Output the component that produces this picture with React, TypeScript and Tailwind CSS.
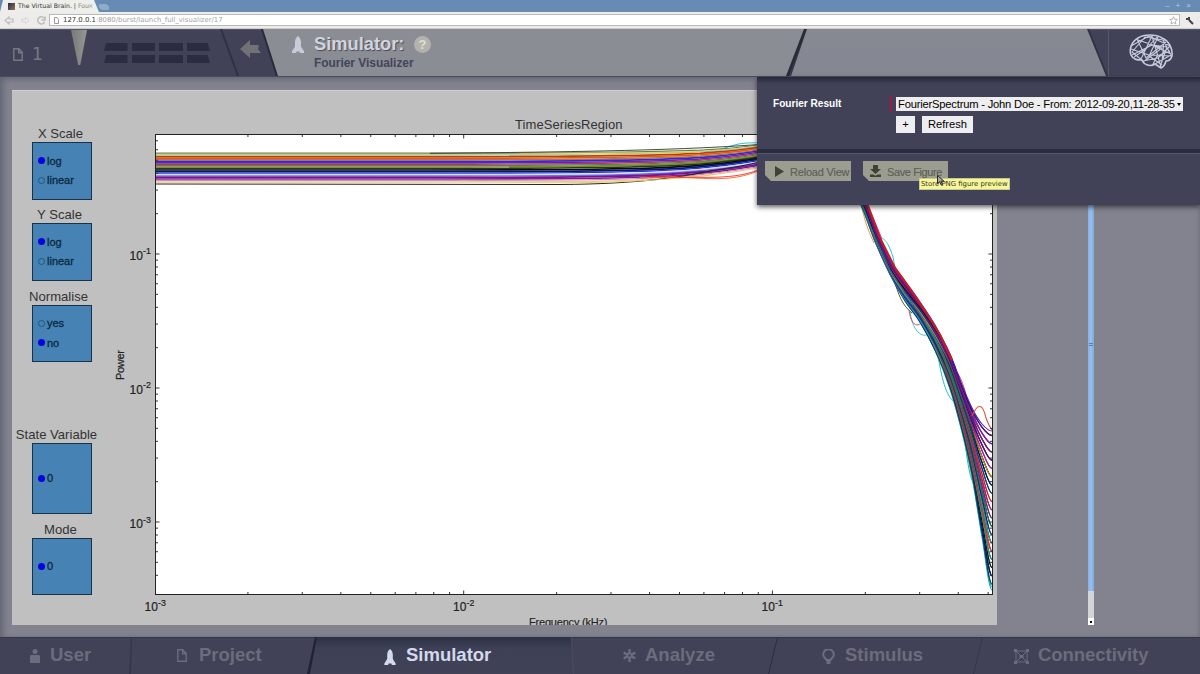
import React from "react";

type Pt = [number, number];

function spline(points: Pt[]): string {
  let d = `M${points[0][0]} ${points[0][1].toFixed(1)}`;
  for (let i = 0; i < points.length - 1; i++) {
    const p0 = points[Math.max(0, i - 1)];
    const p1 = points[i];
    const p2 = points[i + 1];
    const p3 = points[Math.min(points.length - 1, i + 2)];
    const h = (p2[0] - p1[0]) / 3;
    const m1 = (p2[1] - p0[1]) / (p2[0] - p0[0]);
    const m2 = i + 2 > points.length - 1 ? 0 : (p3[1] - p1[1]) / (p3[0] - p1[0]);
    d += `C${(p1[0] + h).toFixed(1)} ${(p1[1] + m1 * h).toFixed(1)} ${(p2[0] - h).toFixed(1)} ${(p2[1] - m2 * h).toFixed(1)} ${p2[0]} ${p2[1].toFixed(1)}`;
  }
  return d;
}

const flatLines: [number, string, number][] = [
  [153.2, "#77803a", 1.2],
  [154.8, "#9fd8a0", 1.4],
  [156.6, "#c23c10", 1.8],
  [158.2, "#d8601c", 1.7],
  [159.8, "#c9722e", 1.4],
  [161.4, "#2b2bd8", 1.6],
  [162.9, "#5a28b8", 1.6],
  [164.3, "#c0305c", 1.4],
  [165.6, "#5c7a5c", 1.4],
  [167, "#739030", 1.6],
  [168.5, "#2c3a08", 1.6],
  [170, "#080c10", 1.7],
  [171.6, "#0c1470", 1.7],
  [173.1, "#2838c8", 1.4],
  [174.6, "#d4dcff", 1.2],
  [176, "#6078d8", 1.3],
  [177.4, "#80108c", 1.8],
  [179, "#841898", 1.6],
  [180.4, "#b88ab0", 1],
  [182, "#f4c690", 1.3],
  [184, "#20281c", 1],
];

const upperColors = ["#4a20b0", "#5a108c", "#111111", "#7a1cac", "#b81c9c", "#3c2080", "#8c1450", "#2030b0"];
const lowerColors = ["#111111", "#0b2a80", "#c8202a", "#12a0a0", "#208c40", "#16309c", "#e04020", "#6a1ca8", "#101820", "#20a890", "#b81c70", "#d88020", "#1c4ca0", "#086030", "#8c1430"];

const upper: Pt[] = [[858, 188], [866, 203], [875, 227], [890, 260], [905, 281], [920, 302], [935, 325], [950, 354], [962, 385], [972, 408], [982, 424], [992, 431]];
const lower: Pt[] = [[858, 199], [866, 219], [875, 243], [890, 276], [905, 303], [920, 324], [935, 352], [950, 389], [962, 432], [972, 477], [982, 537], [992, 590]];

const fallLines = Array.from({ length: 54 }, (_, i) => {
  const t = i / 53;
  const mixed = ((i * 23) % 54) / 53;
  const wobble = (((i * 29) % 11) / 10 - 0.5) * 0.05;
  const points: Pt[] = upper.map(([x, y], k) => {
    const blend = Math.max(0, Math.min(1, (7 - k) / 4)) * 0.55;
    const spread = t * (1 - blend) + mixed * blend;
    const end = k > 9 && i > 0 && i < 52 ? Math.max(0, spread + wobble) : spread;
    return [x, y + (lower[k][1] - y) * end] as Pt;
  });
  const color = i > 51 ? "#18b8a0" : t < 0.26 ? upperColors[i % upperColors.length] : lowerColors[(i * 4) % lowerColors.length];
  return { d: spline(points), color };
}).reverse();

const xDecade = 308.7;
const yDecade = 134;

const xTicks: number[] = [];
for (let k = 0; k < 3; k++) for (let n = 2; n < 10; n++) {
  const x = 155 + xDecade * (k + Math.log10(n));
  if (x < 990) xTicks.push(x);
}
const yTicks: number[] = [];
for (let k = 0; k < 5; k++) for (let n = 2; n < 10; n++) {
  const y = 254 + yDecade * (k - Math.log10(n));
  if (y > 136 && y < 592) yTicks.push(y);
}

function Exponent({ x, y, e }: { x: number; y: number; e: string }) {
  return (
    <g fill="#222">
      <text x={x} y={y} fontSize="12" stroke="#222" strokeWidth=".2">10</text>
      <text x={x + 13.5} y={y - 5.5} fontSize="8.8" stroke="#222" strokeWidth=".2">{e}</text>
    </g>
  );
}

function Chart() {
  return (
    <svg className="h-[534px] w-[885px] shrink-0 font-['Liberation_Sans',sans-serif]" viewBox="112 91 885 534">
      <defs>
        <clipPath id="plot"><rect x="155.5" y="134.5" width="837" height="460" /></clipPath>
      </defs>
      <rect x="155.5" y="134.5" width="837" height="460" fill="#fff" />
      <g fill="none" clipPath="url(#plot)">
        <path d="M715 152C735 143 745 142 765 143" stroke="#30c8c8" strokeWidth="1.1" />
        {flatLines.map(([y, color, width], i) => {
          const f = i / (flatLines.length - 1);
          const end = 146 + 24 * f;
          return (
            <path
              key={y}
              d={
                i === flatLines.length - 1
                  ? "M155 184L560 184.5C640 184 680 177 710 171C735 167 745 166 775 158"
                  : `M155 ${y}L430 ${y}C560 ${y} 650 ${y - 1 + f} 700 ${y - 3 - f * 3}C725 ${y - 5 - f * 4} 740 ${end + 3} 775 ${end - 4}`
              }
              stroke={color}
              strokeWidth={width}
            />
          );
        })}
        <path d="M520 153.5C600 150 640 155 700 152" stroke="#e0c030" strokeWidth=".8" />
        <path d="M430 153.3C580 152 690 150 765 144" stroke="#30382c" strokeWidth=".9" />
        <path d="M460 181C560 184 640 184 715 174" stroke="#e8d078" strokeWidth="1" />
        <path d="M640 178C700 174 725 187 765 168" stroke="#ff7038" strokeWidth="1" />
        <path d="M650 177C700 176 735 182 765 167" stroke="#e8302c" strokeWidth=".9" />
        <path d="M861 203Q865 225 874 243" stroke="#f09838" />
        <path d="M867 203Q874 220 882 239" stroke="#d038c8" />
        <path d="M876 243C880 236 886 235 893 257Q894 268 899 278" stroke="#28c4d8" />
        <path d="M893 277C899 296 902 305 912 313" stroke="#506018" />
        <path d="M910 311C912 330 922 340 930 333" stroke="#40c4c8" />
        <path d="M909 310C911 325 917 328 922 322" stroke="#d05060" />
        <path d="M938 355C941 375 946 398 955 402" stroke="#28b8d8" />
        <path d="M950 367C957 366 965 387 967 400" stroke="#e04048" />
        <path d="M962 420C967 455 969 488 979 488" stroke="#20b8b0" />
        {fallLines.map((line, i) => (
          <path key={i} d={line.d} stroke={line.color} strokeWidth="1.1" />
        ))}
        <path d="M861 202L875 237L890 270L905 293L920 314L935 340L950 372L962 406" stroke="#168068" strokeWidth="1.2" />
        <path d="M862 190L880 238L895 268L910 289L925 311L940 335L952 360" stroke="#c81c1c" strokeWidth="2.2" />
        <path d="M972 416C978 402 983 404 986 418Q989 426 992 430" stroke="#e05038" strokeWidth="1.1" />
      </g>
      <g stroke="#333" strokeWidth="1">
        {xTicks.map((x) => <path key={x} d={`M${x} 594.5v-2.5M${x} 134.5v2.5`} />)}
        {yTicks.map((y) => <path key={y} d={`M155.5 ${y}h2.5M992.5 ${y}h-2.5`} />)}
        {[463.7, 772.4].map((x) => <path key={x} d={`M${x} 594.5v-4M${x} 134.5v4`} />)}
        {[254, 388, 522].map((y) => <path key={y} d={`M155.5 ${y}h4M992.5 ${y}h-4`} />)}
      </g>
      <rect x="155.5" y="134.5" width="837" height="460" fill="none" stroke="#222" />
      <text x="515" y="129" fontSize="13" textLength="107.5" fill="#333">TimeSeriesRegion</text>
      <Exponent x={129.5} y={259.5} e="-1" />
      <Exponent x={129.5} y={393.5} e="-2" />
      <Exponent x={129.5} y={528} e="-3" />
      <Exponent x={144.5} y={611} e="-3" />
      <Exponent x={453} y={611} e="-2" />
      <Exponent x={761.5} y={611} e="-1" />
      <text x="529" y="626" fontSize="11" textLength="78.5" fill="#222" stroke="#222" strokeWidth=".15">Frequency (kHz)</text>
      <text transform="translate(124 380) rotate(-90)" fontSize="11" textLength="30" fill="#222" stroke="#222" strokeWidth=".2">Power</text>
    </svg>
  );
}

function Widget({ title, options, selected, box, shift }: { title: string; options: string[]; selected: number; box: string; shift: string }) {
  return (
    <div className="flex w-[60px] flex-col items-center">
      <div className={`flex h-4 items-center whitespace-nowrap text-[13.1px] leading-4 text-[#333] ${shift}`}>{title}</div>
      <div className={`flex w-full flex-col justify-center gap-[7.5px] border border-[#17334a] bg-[#4682b4] pb-px pl-[5px] ${box}`}>
        {options.map((label, i) => (
          <div key={label} className="flex h-3 items-center gap-[2px] text-[11px] leading-3 text-[#0a2940] [-webkit-text-stroke:.3px_#0a2940]">
            <span className={`size-[7px] rounded-full ${i === selected ? "bg-[#0404e0]" : "border border-[#175982]"}`} />
            {label}
          </div>
        ))}
      </div>
    </div>
  );
}

function Rocket({ className }: { className: string }) {
  return (
    <svg className={className} viewBox="0 0 12 17" fill="currentColor">
      <path d="M6 0C3.7 1.7 3 4 3 6.600v4L0 15.300V17h4l.6-1.500h2.800L8 17h4v-1.700l-3-4.700v-4C9 4 8.300 1.700 6 0Z" />
    </svg>
  );
}

function PageIcon({ className }: { className: string }) {
  return (
    <svg className={className} viewBox="0 0 10 13" fill="none" stroke="currentColor" strokeWidth="1.4">
      <path d="M.8.8h5L9.2 4.4v7.8H.8ZM5.6.8v3.9h3.6" />
    </svg>
  );
}

function Brain() {
  return (
    <svg className="h-[36px] w-[44px]" viewBox="0 0 44 36" fill="none" stroke="#c6cadb" strokeWidth="1.6" strokeLinejoin="round">
      <path d="M2 21C0 16 2 8 9 4 15 0 27 0 33 4c7 3 11 11 10 18-1 3-3 5-6 5-1 4-3 6-5 7l-6-4c-5 3-11 1-13-4-4 0-9 0-11-5Z" />
      <path d="M2 12 20 2 41 12 29 24 14 27 3 18 16 3 34 6 42 21 24 31M8 5l9 19 20-16M3 21l20-10 19 9M12 25 23 2l9 31M2 15l18 6 22 1M9 6l24 8-19 14M29 3l-9 19 13 9M5 23l12-8L28 3M35 6l-2 22M24 11l14 2-7 20M24 30l4-8 13-5" strokeWidth="1.1" />
    </svg>
  );
}

function Header() {
  return (
    <header className="flex h-12 shrink-0 items-start border-b border-[#4a4c5a] bg-[#414257] shadow-[inset_0_1px_0_#555769]">
      <div className="flex h-[47px] w-[62px] items-center pl-[13px] pt-[3px] text-[#777988]">
        <PageIcon className="h-[13px] w-[10px]" />
        <span className="ml-[9px] font-['DejaVu_Sans',sans-serif] text-[17px] leading-5">1</span>
      </div>
      <div className="ml-[9px] mt-[1px] h-[35px] w-[16px] bg-gradient-to-r from-[#777979] to-[#969797] [clip-path:polygon(0_0,100%_0,58%_100%,45%_100%)]" />
      <div className="ml-[17px] mt-[14px] grid w-[106px] grid-cols-4 gap-x-1 gap-y-1">
        {Array.from({ length: 8 }, (_, i) => (
          <span key={i} className={`h-2 bg-[#2b2c40] ${i % 4 === 0 ? "[clip-path:polygon(9%_0,100%_0,100%_100%,0_100%)]" : i % 4 === 3 ? "[clip-path:polygon(0_0,90%_0,100%_100%,0_100%)]" : ""}`} />
        ))}
      </div>
      <div className="ml-[10px] h-[47px] w-[19px] bg-[#30313f] [clip-path:polygon(0_0,2px_0,100%_100%,17px_100%)]" />
      <svg className="ml-px mt-[11px] h-[18px] w-[21px]" viewBox="0 0 21 18" fill="#717276"><path d="M0 9 10 0v5h9l-1 4 3 4H10v5Z" /></svg>
      <div className="h-[47px] w-[546px] bg-[#292b39] [clip-path:polygon(0_0,100%_0,528px_100%,15px_100%)]">
        <div className="flex h-full bg-[#8a8d94] [clip-path:polygon(2px_0,543px_0,525px_100%,17px_100%)]">
          <Rocket className="ml-[31px] mt-[7px] h-[17px] w-[12px] text-[#c8cbd8]" />
          <div className="ml-[10px] mt-[5px]">
            <div className="flex items-center">
              <h1 className="w-[92px] whitespace-nowrap text-[18.3px] font-bold leading-5 text-[#d1d4df] [text-shadow:1px_1px_1px_#484b56]">Simulator:</h1>
              <span className="ml-[8px] flex size-[17px] items-center justify-center rounded-full bg-[#b4b3ab] text-[13px] font-bold leading-none text-[#dedfdb]">?</span>
            </div>
            <div className="pt-[2px] text-[12px] font-bold leading-[14px] tracking-[-0.05px] text-[#43455a]">Fourier Visualizer</div>
          </div>
        </div>
      </div>
      <div className="-ml-[17px] h-[47px] w-[318px] bg-[#303240] [clip-path:polygon(16px_0,299px_0,100%_100%,0_100%)]">
        <div className="h-full bg-gradient-to-b from-[#868992] to-[#858892] [clip-path:polygon(17px_0,297px_0,316px_100%,1px_100%)]" />
      </div>
      <div className="h-[47px] w-px bg-[#565868]" />
      <div className="flex h-[47px] flex-1 items-center justify-center pb-px pr-[8px]"><Brain /></div>
    </header>
  );
}

function OverlayMenu() {
  const btn = "flex h-5 items-center whitespace-nowrap bg-[#9c9d91] text-[11px] leading-none text-[#5c5f55] [clip-path:polygon(0_0,100%_0,100%_100%,6px_100%,0_14px)] [-webkit-text-stroke:.15px_#5c5f55]";
  return (
    <div className="absolute right-0 top-0 h-[128px] w-[443px] bg-[#414257] shadow-[0_2px_5px_#222b]">
      <div className="flex h-[76px] items-start border-b-[4px] border-[#292b3e] bg-gradient-to-b from-[#25273a] via-[#414257] via-[7px] to-[#414257] pt-[20px]">
        <div className="ml-4 w-[117px] text-[10.1px] font-bold leading-[13px] text-white">Fourier Result</div>
        <div className="mt-[-1px] h-4 w-[2px] bg-[#a51744]" />
        <div className="ml-[4px] flex flex-col gap-[5px]">
          <div className="flex h-[14px] w-[287px] items-center bg-[#eeeeef] pl-[2px] text-black">
            <span className="w-[277px] overflow-hidden whitespace-nowrap text-[11.2px] leading-[14px] tracking-[-0.2px]">FourierSpectrum - John Doe - From: 2012-09-20,11-28-35</span>
            <svg className="ml-[2px] h-[3px] w-1" viewBox="0 0 4 3"><path d="M0 0h4L2 3Z" /></svg>
          </div>
          <div className="flex gap-[7px] text-[11.2px] text-black">
            <button className="h-[17px] w-[19px] bg-[#eeeef0] leading-[15px]">+</button>
            <button className="h-[17px] w-[51px] bg-[#eeeef0] leading-[15px]">Refresh</button>
          </div>
        </div>
      </div>
      <div className="flex gap-3 border-t border-[#55576a] pl-2 pt-[7px]">
        <div className={`${btn} w-[86px] pl-[10px]`}>
          <svg className="mr-[6px] h-[11px] w-[9px] shrink-0" viewBox="0 0 9 11"><path d="M0 0 9 5.5 0 11Z" fill="#3e4234" /></svg>
          <span className="pt-[2px] tracking-[-0.2px]">Reload View</span>
        </div>
        <div className={`${btn} w-[85px] pl-[7px]`}>
          <svg className="mr-[6px] h-[12px] w-[11px] shrink-0" viewBox="0 0 11 12" fill="#3e4234"><path d="M3 0h5v4h3L5.5 9 0 4h3ZM0 9.500h3.400l2.100 1.200 2.100-1.200H11V12H0Z" /></svg>
          <span className="pt-[2px] tracking-[-0.4px]">Save Figure</span>
        </div>
      </div>
      <div className="absolute left-[162px] top-[101px] h-3 w-[91px] whitespace-nowrap border border-[#c8c894] bg-[#f7f795] pl-px font-['DejaVu_Sans',sans-serif] text-[6.9px] leading-[10px] text-[#333]">Store PNG figure preview</div>
      <svg className="absolute left-[180px] top-[98px] h-[11px] w-[8px]" viewBox="0 0 8 11"><path d="M.5.5v8l2-1.800 1.800 3.500 1.300-.700-1.700-3.200 3-.200Z" fill="#aaa" stroke="#292929" /></svg>
    </div>
  );
}

function Nav() {
  const gear = <svg className="h-[13px] w-[13px]" viewBox="0 0 14 14" stroke="currentColor" strokeWidth="2.6"><path d="M7 0v5M7 9v5M.7 4 5 6M9 8l4.3 2M.7 10 5 8M9 6l4.3-2" /><circle cx="7" cy="7" r="2.2" fill="none" strokeWidth="1.8" /></svg>;
  const base = "flex h-full shrink-0 items-center text-[18.5px] font-bold leading-none";
  return (
    <nav className="flex h-[37px] shrink-0 bg-[#414257] text-[#6b6c7d] shadow-[inset_0_1px_0_#34364a]">
      <div className={`${base} w-[129px] pl-[30px]`}>
        <svg className="mr-[10px] h-[14px] w-[10px]" viewBox="0 0 10 14" fill="currentColor"><circle cx="5" cy="2.5" r="2.5" /><path d="M1 6h8l1 1v7H0V7Z" /></svg>
        <span>User</span>
      </div>
      <div className="h-full w-[4px] bg-[#353648] [clip-path:polygon(2px_0,3px_0,2px_100%,0_100%)]" />
      <div className={`${base} w-[174px] pl-[44px]`}><PageIcon className="mr-[12px] h-[13px] w-[10px]" /><span>Project</span></div>
      <div className="h-full w-[264px] bg-[#202334] [clip-path:polygon(8px_0,100%_0,100%_100%,0_100%)]">
        <div className={`${base} bg-gradient-to-b from-[#2c3145] via-[#3d4056] via-30% to-[#414257] pl-[77px] text-[#d4d9eb] [clip-path:polygon(10px_0,100%_0,100%_100%,3px_100%)]`}>
          <Rocket className="mr-[10px] mt-[3px] h-[16px] w-[12px]" /><span>Simulator</span>
        </div>
      </div>
      <div className="h-full w-[3px] bg-[#4a4c5e] [clip-path:polygon(0_0,1px_0,3px_100%,2px_100%)]" />
      <div className={`${base} w-[194px] gap-[9px] pl-[49px]`}>{gear}<span>Analyze</span></div>
      <div className="h-full w-[10px] bg-[#2d2e40] [clip-path:polygon(9px_0,10px_0,1px_100%,0_100%)]" />
      <div className={`${base} w-[195px] pl-[44px]`}>
        <svg className="mr-[10px] mt-[2px] h-[16px] w-[13px]" viewBox="0 0 13 16" fill="none" stroke="currentColor" strokeWidth="2"><path d="M4.5 11C3.6 9.2 1.2 8.1 1.2 5.5a5.3 5.3 0 0 1 10.6 0c0 2.6-2.4 3.7-3.3 5.5Z" /><path d="M4.5 13.5h4" strokeWidth="3" /></svg>
        <span>Stimulus</span>
      </div>
      <div className="h-full w-[10px] bg-[#353649] [clip-path:polygon(9px_0,10px_0,1px_100%,0_100%)]" />
      <div className={`${base} flex-1 pl-[31px]`}>
        <svg className="mr-[9px] mt-px h-[15px] w-[15px]" viewBox="0 0 15 15" fill="none" stroke="currentColor"><path d="M2 2h11v11H2ZM2 2l11 11M13 2 2 13" /><path d="M0 1.5h3M12 1.5h3M0 13.5h3M12 13.5h3M5.5 7.5h4" strokeWidth="3" /></svg>
        <span className="whitespace-nowrap tracking-[-0.05px]">Connectivity</span>
      </div>
    </nav>
  );
}

export default function App() {
  return (
    <div className="flex h-[674px] w-[1200px] flex-col overflow-hidden bg-[#82838f] font-['Liberation_Sans',sans-serif]">
      <div className="flex h-3 shrink-0 items-end justify-between bg-[#688bb3]">
        <div className="flex items-end">
          <div className="flex h-[12px] w-[99px] items-center bg-[#eeeeeb] pl-2 font-['DejaVu_Sans',sans-serif] text-[6.2px] leading-none text-[#333] [clip-path:polygon(3px_0,94px_0,100%_100%,0_100%)]">
            <span className="mr-[3px] size-[7px] bg-gradient-to-br from-[#222d42] via-[#56505a] to-[#b36a30]" />
            <span className="w-[70px] whitespace-nowrap">The Virtual Brain. | <span className="text-[#888]">Fou</span></span>
            <span className="text-[#999]">×</span>
          </div>
          <span className="mb-[2px] h-[6px] w-[10px] -skew-x-[-20deg] rounded-sm bg-[#8eabca]" />
        </div>
        <div className="flex h-[10px] w-[35px] gap-[6px] text-[8px] leading-[8px] text-[#b7cbe0]"><span>–</span><span>+</span><span>×</span></div>
      </div>
      <div className="flex h-[17px] shrink-0 items-center border-b border-[#ccc] bg-[#edecea]">
        <div className="flex w-[49px] gap-[7px] pl-1 text-[#bdbdb8]">
          <svg className="h-[9px] w-[10px]" viewBox="0 0 10 9" fill="none" stroke="currentColor" strokeWidth="1.2"><path d="M5 1 1 4.5 5 8V6h4V3H5Z" /></svg>
          <svg className="h-[9px] w-[9px] opacity-50" viewBox="0 0 10 9" fill="none" stroke="currentColor"><path d="M5 1l4 3.5L5 8V6H1V3h4Z" /></svg>
          <svg className="h-[9px] w-[9px]" viewBox="0 0 10 9" fill="none" stroke="currentColor" strokeWidth="1.6"><path d="M8 2A4 4 0 1 0 8.5 6M9 0v4H5" /></svg>
        </div>
        <div className="flex h-[12px] w-[1131px] items-center border border-[#b9b9b7] bg-white pl-1 font-['DejaVu_Sans',sans-serif] text-[6.9px] leading-none text-[#a3a3a3]">
          <svg className="mr-[4px] h-[7px] w-[5px] text-[#999]" viewBox="0 0 5 7" fill="none" stroke="currentColor"><path d="M.5.5h2.7l1.3 2v4h-4Z" /></svg>
          <span className="flex-1 whitespace-nowrap"><span className="text-[#333]">127.0.0.1</span>:8080/burst/launch_full_visualizer/17</span>
          <svg className="mr-[1px] size-[9px]" viewBox="0 0 10 10" fill="none" stroke="#aaa"><path d="m5 .8 1.2 2.8 3.1.2L7 5.9l.7 3L5 7.3 2.3 8.9l.7-3L.7 3.8l3.1-.2Z" /></svg>
        </div>
        <svg className="ml-[5px] size-[9px]" viewBox="0 0 9 9" fill="none" stroke="#444" strokeWidth="2"><path d="m8 8-4-4M1 3h3V1" /></svg>
      </div>
      <Header />
      <main className="relative flex h-[560px] shrink-0 bg-[#82838f] pl-3 pt-[14px] shadow-[inset_5px_4px_6px_-2px_#626473,inset_-3px_-2px_4px_-2px_#6d6f7d]">
        <section className="flex h-[534px] w-[985px] shrink-0 bg-[#c0c0c0] shadow-[0_-1px_0_#cfcfcf]">
          <div className="flex w-[100px] shrink-0 flex-col pl-5 pt-[35px]">
            <Widget title="X Scale" options={["log", "linear"]} selected={0} box="h-[58px]" shift="mr-[3px]" />
            <div className="h-[7px]" />
            <Widget title="Y Scale" options={["log", "linear"]} selected={0} box="h-[58px]" shift="mr-[5px]" />
            <div className="h-2" />
            <Widget title="Normalise" options={["yes", "no"]} selected={1} box="h-[57px]" shift="mr-[7px]" />
            <div className="h-[65px]" />
            <Widget title="State Variable" options={["0"]} selected={0} box="h-[71px]" shift="mr-[11px]" />
            <div className="h-2" />
            <Widget title="Mode" options={["0"]} selected={0} box="h-[57px]" shift="mr-[3px]" />
          </div>
          <Chart />
        </section>
        <div className="ml-[91px] flex h-[534px] w-[6px] flex-col bg-[#d5d5d7]">
          <div className="flex h-[500px] flex-col bg-gradient-to-r from-[#87b1e4] via-[#99bff0] to-[#81a8db] pt-[252px]">
            <span className="mx-auto h-px w-1 bg-[#607fae]" /><span className="mx-auto mt-px h-px w-1 bg-[#607fae]" />
          </div>
          <div className="flex-1" />
          <div className="flex h-[7px] items-center justify-center bg-white"><span className="size-[2px] bg-black" /></div>
        </div>
        <OverlayMenu />
      </main>
      <Nav />
    </div>
  );
}
